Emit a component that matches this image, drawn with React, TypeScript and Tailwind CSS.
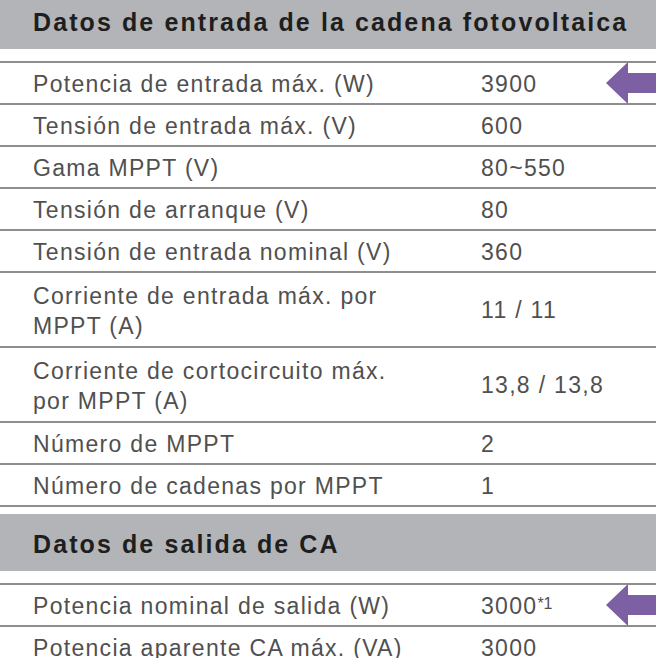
import React from "react";

type Row = { label: React.ReactNode; value: React.ReactNode; tall?: boolean; arrow?: boolean };

const inputRows: Row[] = [
  { label: "Potencia de entrada máx. (W)", value: "3900", arrow: true },
  { label: "Tensión de entrada máx. (V)", value: "600" },
  { label: "Gama MPPT (V)", value: "80~550" },
  { label: "Tensión de arranque (V)", value: "80" },
  { label: "Tensión de entrada nominal (V)", value: "360" },
  {
    label: (
      <>
        Corriente de entrada máx. por
        <br />
        MPPT (A)
      </>
    ),
    value: "11 / 11",
    tall: true,
  },
  {
    label: (
      <>
        Corriente de cortocircuito máx.
        <br />
        por MPPT (A)
      </>
    ),
    value: "13,8 / 13,8",
    tall: true,
  },
  { label: "Número de MPPT", value: "2" },
  { label: "Número de cadenas por MPPT", value: "1" },
];

const outputRows: Row[] = [
  {
    label: "Potencia nominal de salida (W)",
    value: (
      <>
        3000<sup className="text-[16px] tracking-normal relative -top-[5px]">*1</sup>
      </>
    ),
    arrow: true,
  },
  { label: "Potencia aparente CA máx. (VA)", value: "3000" },
];

const Arrow = () => (
  <svg className="absolute right-0 top-1/2 -translate-y-1/2" width="50" height="42" viewBox="0 0 50 42">
    <polygon points="0,21 22,0 22,11 50,11 50,31 22,31 22,42" fill="#7d60a3" />
  </svg>
);

const TableRow = ({ row }: { row: Row }) => (
  <div
    className={`relative flex items-center border-b-2 border-[#8e8e8e] ${
      row.tall ? "h-[75px]" : "h-[42px]"
    }`}
  >
    <div className="w-[481px] pl-[33px] pt-[2px] leading-[30px]">{row.label}</div>
    <div className="flex-1 pt-[2px]">{row.value}</div>
    {row.arrow && <Arrow />}
  </div>
);

const Header = ({ title, className }: { title: string; className: string }) => (
  <div className={`flex items-center bg-[#b3b4b7] pl-[33px] ${className}`}>
    <h2 className="text-[25px] font-bold tracking-[2.1px] text-[#1e1e1e]">{title}</h2>
  </div>
);

export default function App() {
  return (
    <div
      className="w-[656px] h-[658px] overflow-hidden bg-white text-[23px] tracking-[1.3px] text-[#505050]"
      style={{ fontFamily: "'Liberation Sans', Arial, sans-serif" }}
    >
      <Header title="Datos de entrada de la cadena fotovoltaica" className="h-[49px] pb-[3px]" />
      <div className="mt-[12px] border-t-2 border-[#8e8e8e]">
        {inputRows.map((r, i) => (
          <TableRow key={i} row={r} />
        ))}
      </div>
      <Header title="Datos de salida de CA" className="mt-[7px] h-[57px] pt-[5px]" />
      <div className="mt-[12px] border-t-2 border-[#8e8e8e]">
        {outputRows.map((r, i) => (
          <TableRow key={i} row={r} />
        ))}
      </div>
    </div>
  );
}
